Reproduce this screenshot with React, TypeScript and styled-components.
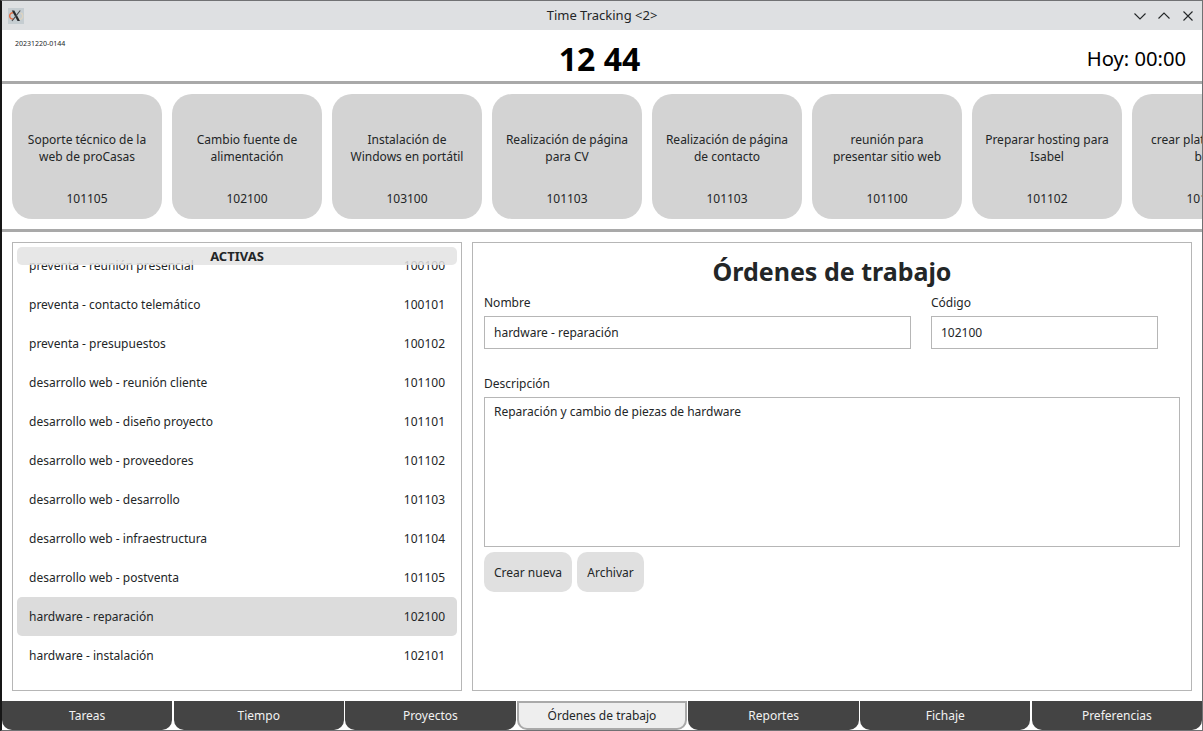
import React from "react";
import styled, { createGlobalStyle } from "styled-components";

const GlobalStyle = createGlobalStyle`
  * { box-sizing: border-box; }
  body { margin: 0; background: #fff; }
`;

const Window = styled.div`
  width: 1203px;
  height: 731px;
  display: flex;
  flex-direction: column;
  overflow: hidden;
  background: #fff;
  border: 1px solid #707173;
  border-left: 2px solid #161616;
  border-top-color: #717274;
  color: #232627;
  font: 12px/17px "Noto Sans", sans-serif;
`;

const TitleBar = styled.div`
  height: 29px;
  flex: none;
  display: grid;
  grid-template-columns: 80px 1fr 80px;
  align-items: center;
  padding: 0 8px 0 5px;
  background: #dee0e2;
  font-size: 13px;
`;

const WindowTitle = styled.div`
  text-align: center;
  padding-left: 3px;
`;

const WindowControls = styled.div`
  display: flex;
  justify-content: flex-end;
  gap: 12px;
`;

const Header = styled.header`
  height: 54px;
  flex: none;
  display: grid;
  grid-template-columns: 1fr auto 1fr;
  border-bottom: 3px solid #a9a9a9;
  color: #000;
`;

const Version = styled.div`
  padding: 8px 0 0 13px;
  font-size: 7px;
  line-height: 12px;
  color: #232627;
`;

const Clock = styled.div`
  font-size: 32px;
  line-height: 58px;
  height: 51px;
  font-weight: 700;
  padding-right: 5px;
`;

const Today = styled.div`
  text-align: right;
  padding-right: 16px;
  font-size: 20.2px;
  line-height: 56px;
  height: 51px;
`;

const TaskStrip = styled.div`
  height: 148px;
  flex: none;
  display: flex;
  gap: 10px;
  padding: 10px;
  overflow: hidden;
  border-bottom: 3px solid #a9a9a9;
`;

const TaskCard = styled.div`
  width: 150px;
  height: 125px;
  flex: none;
  display: flex;
  flex-direction: column;
  align-items: center;
  padding: 37px 0 12px;
  border-radius: 20px;
  background: #d3d3d3;
  text-align: center;
  white-space: pre;
`;

const TaskCode = styled.div`
  margin-top: auto;
`;

const Main = styled.main`
  flex: 1;
  min-height: 0;
  display: flex;
  gap: 10px;
  padding: 10px;
`;

const ListPanel = styled.section`
  position: relative;
  width: 450px;
  flex: none;
  padding: 3px 4px;
  border: 1px solid #b6b6b6;
`;

const ListHeading = styled.div`
  position: absolute;
  top: 4px;
  left: 4px;
  right: 4px;
  height: 18px;
  border-radius: 5px;
  background: rgba(227, 227, 227, 0.85);
  font-size: 13px;
  font-weight: 700;
  line-height: 18px;
  text-align: center;
`;

const OrderRow = styled.div<{ $selected?: boolean }>`
  height: 39px;
  display: flex;
  align-items: center;
  justify-content: space-between;
  padding: 0 12px;
  border-radius: 5px;
  background: ${(p) => (p.$selected ? "#dcdcdc" : "transparent")};
`;

const FormPanel = styled.section`
  flex: 1;
  padding: 10px 11px;
  border: 1px solid #b6b6b6;
`;

const FormTitle = styled.h1`
  margin: 0 0 5px;
  font-size: 25px;
  line-height: 36px;
  text-align: center;
`;

const FieldRow = styled.div`
  display: flex;
  gap: 20px;
  margin-bottom: 26px;
`;

const Field = styled.label<{ $width: number }>`
  width: ${(p) => p.$width}px;
  display: flex;
  flex-direction: column;
  gap: 5px;
`;

const TextInput = styled.input`
  height: 33px;
  padding: 0 9px;
  border: 1px solid #b6b6b6;
  outline: none;
  background: #fff;
  color: inherit;
  font: inherit;
`;

const TextArea = styled.textarea`
  height: 150px;
  padding: 5px 9px;
  border: 1px solid #b6b6b6;
  outline: none;
  resize: none;
  background: #fff;
  color: inherit;
  font: inherit;
`;

const Actions = styled.div`
  display: flex;
  gap: 5px;
  margin-top: 5px;
`;

const ActionButton = styled.button<{ $width: number }>`
  width: ${(p) => p.$width}px;
  height: 40px;
  padding: 0;
  border: 0;
  border-radius: 10px;
  background: #e0e0e0;
  color: inherit;
  font: inherit;
`;

const TabBar = styled.nav`
  height: 29px;
  flex: none;
  display: grid;
  grid-template-columns: repeat(7, 1fr);
  gap: 1.3px;
`;

const Tab = styled.div<{ $active?: boolean }>`
  display: flex;
  align-items: center;
  justify-content: center;
  border: ${(p) => (p.$active ? "2px solid #a9a9a9" : "0")};
  border-radius: 0 0 10px 10px;
  background: ${(p) => (p.$active ? "#eeeeee" : "#444444")};
  color: ${(p) => (p.$active ? "#232627" : "#f2f2f2")};
`;

const tasks = [
  ["Soporte técnico de la\nweb de proCasas", "101105"],
  ["Cambio fuente de\nalimentación", "102100"],
  ["Instalación de\nWindows en portátil", "103100"],
  ["Realización de página\npara CV", "101103"],
  ["Realización de página\nde contacto", "101103"],
  ["reunión para\npresentar sitio web", "101100"],
  ["Preparar hosting para\nIsabel", "101102"],
  ["crear plataforma de\nblog", "101103"],
];

const orders = [
  ["preventa - reunión presencial", "100100"],
  ["preventa - contacto telemático", "100101"],
  ["preventa - presupuestos", "100102"],
  ["desarrollo web - reunión cliente", "101100"],
  ["desarrollo web - diseño proyecto", "101101"],
  ["desarrollo web - proveedores", "101102"],
  ["desarrollo web - desarrollo", "101103"],
  ["desarrollo web - infraestructura", "101104"],
  ["desarrollo web - postventa", "101105"],
  ["hardware - reparación", "102100"],
  ["hardware - instalación", "102101"],
];

const tabs = ["Tareas", "Tiempo", "Proyectos", "Órdenes de trabajo", "Reportes", "Fichaje", "Preferencias"];

const AppIcon = () => (
  <svg width="18" height="18" viewBox="0 0 18 18">
    <rect x="1" y="1" width="16" height="16" fill="#c5cdd1" />
    <path d="M6.500 5.800C3.600 5.600 2.300 7.600 2.700 9.600c.4 1.800 2.200 2.600 4 2.400" fill="none" stroke="#e0714a" strokeWidth="1.500" />
    <path d="M11.500 12.500c2.800 0 4.500-1.500 4.300-3.800-.2-1.500-1.200-2.500-2.300-2.700" fill="none" stroke="#ddd3c0" strokeWidth="1.300" />
    <path d="M4.800 3.500h2.500l5.700 10.500h-2.500z" fill="#26282c" />
    <path d="M13.200 3.500 5 14" stroke="#4b4d52" strokeWidth="1.200" />
  </svg>
);

const ControlIcon = ({ d }: { d: string }) => (
  <svg width="12" height="12" viewBox="0 0 12 12" fill="none" stroke="#232627" strokeWidth="1.100">
    <path d={d} />
  </svg>
);

export default function App() {
  return (
    <Window>
      <GlobalStyle />
      <TitleBar>
        <AppIcon />
        <WindowTitle>Time Tracking &lt;2&gt;</WindowTitle>
        <WindowControls>
          <ControlIcon d="M.5 3.500 6 9l5.500-5.500" />
          <ControlIcon d="M.5 8.500 6 3l5.500 5.500" />
          <ControlIcon d="M1.500 1.500l9 9M10.500 1.500l-9 9" />
        </WindowControls>
      </TitleBar>
      <Header>
        <Version>20231220-0144</Version>
        <Clock>12 44</Clock>
        <Today>Hoy: 00:00</Today>
      </Header>
      <TaskStrip>
        {tasks.map(([name, code], i) => (
          <TaskCard key={i}>
            {name}
            <TaskCode>{code}</TaskCode>
          </TaskCard>
        ))}
      </TaskStrip>
      <Main>
        <ListPanel>
          {orders.map(([name, code]) => (
            <OrderRow key={code} $selected={code === "102100"}>
              <span>{name}</span>
              <span>{code}</span>
            </OrderRow>
          ))}
          <ListHeading>ACTIVAS</ListHeading>
        </ListPanel>
        <FormPanel>
          <FormTitle>Órdenes de trabajo</FormTitle>
          <FieldRow>
            <Field $width={427}>
              Nombre
              <TextInput defaultValue="hardware - reparación" />
            </Field>
            <Field $width={227}>
              Código
              <TextInput defaultValue="102100" />
            </Field>
          </FieldRow>
          <Field $width={696}>
            Descripción
            <TextArea defaultValue="Reparación y cambio de piezas de hardware" spellCheck={false} />
          </Field>
          <Actions>
            <ActionButton $width={88}>Crear nueva</ActionButton>
            <ActionButton $width={67}>Archivar</ActionButton>
          </Actions>
        </FormPanel>
      </Main>
      <TabBar>
        {tabs.map((name) => (
          <Tab key={name} $active={name === "Órdenes de trabajo"}>
            {name}
          </Tab>
        ))}
      </TabBar>
    </Window>
  );
}
